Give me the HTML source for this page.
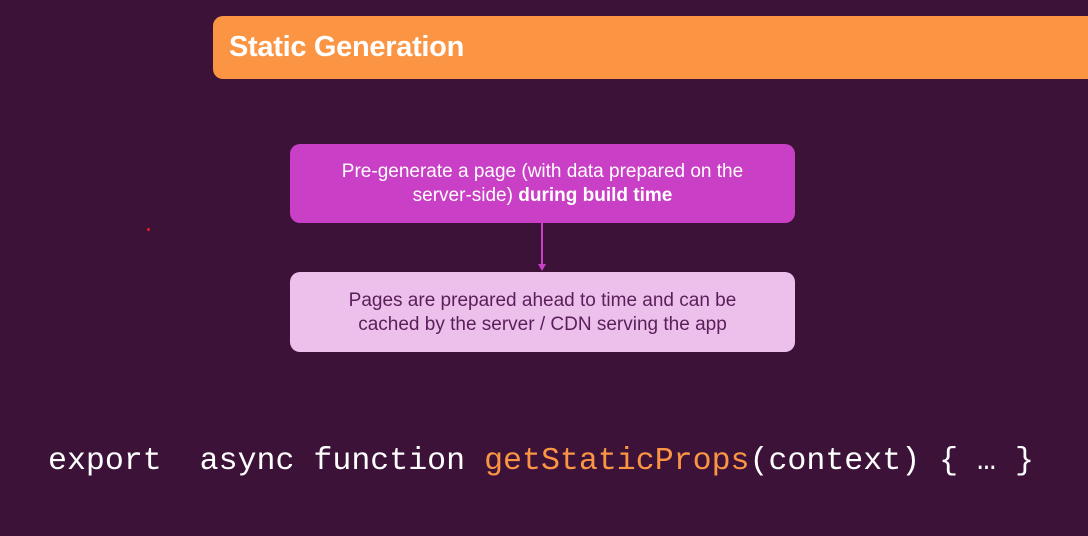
<!DOCTYPE html>
<html><head><style>
body{margin:0;width:1088px;height:536px;background:#3c1239;position:relative;overflow:hidden;font-family:"Liberation Sans",sans-serif}
.hdr{position:absolute;left:213px;top:16px;width:900px;height:63px;background:#fb9543;border-radius:10px}
.hdr span{position:absolute;left:16px;top:15px;color:#fff;font-weight:bold;font-size:29px;letter-spacing:-0.3px}
.b1{position:absolute;left:290px;top:144px;width:505px;height:79px;background:#c93fc5;border-radius:10px;color:#fff;font-size:19px;text-align:center;line-height:24px;box-sizing:border-box;padding-top:16px}
.b2{position:absolute;left:290px;top:272px;width:505px;height:80px;background:#ecc0ea;border-radius:10px;color:#5a1f5a;font-size:19px;text-align:center;line-height:24px;box-sizing:border-box;padding-top:17px}
.line{position:absolute;left:541px;top:223px;width:2px;height:42px;background:#c93fc5}
.arr{position:absolute;left:538px;top:264px;width:0;height:0;border-left:4px solid transparent;border-right:4px solid transparent;border-top:7px solid #c93fc5}
.code{position:absolute;left:48px;top:444px;font-family:"Liberation Mono",monospace;font-size:31.6px;color:#fff;white-space:pre}
.dot{position:absolute;left:147px;top:228px;width:3px;height:3px;background:#e02020;border-radius:50%}
</style></head><body>
<div class="hdr"><span>Static Generation</span></div>
<div class="b1">Pre-generate a page (with data prepared on the<br>server-side) <b>during build time</b></div>
<div class="line"></div><div class="arr"></div>
<div class="b2">Pages are prepared ahead to time and can be<br>cached by the server / CDN serving the app</div>
<div class="dot"></div>
<div class="code">export  async function <span style="color:#fb9543">getStaticProps</span>(context) { … }</div>
</body></html>
